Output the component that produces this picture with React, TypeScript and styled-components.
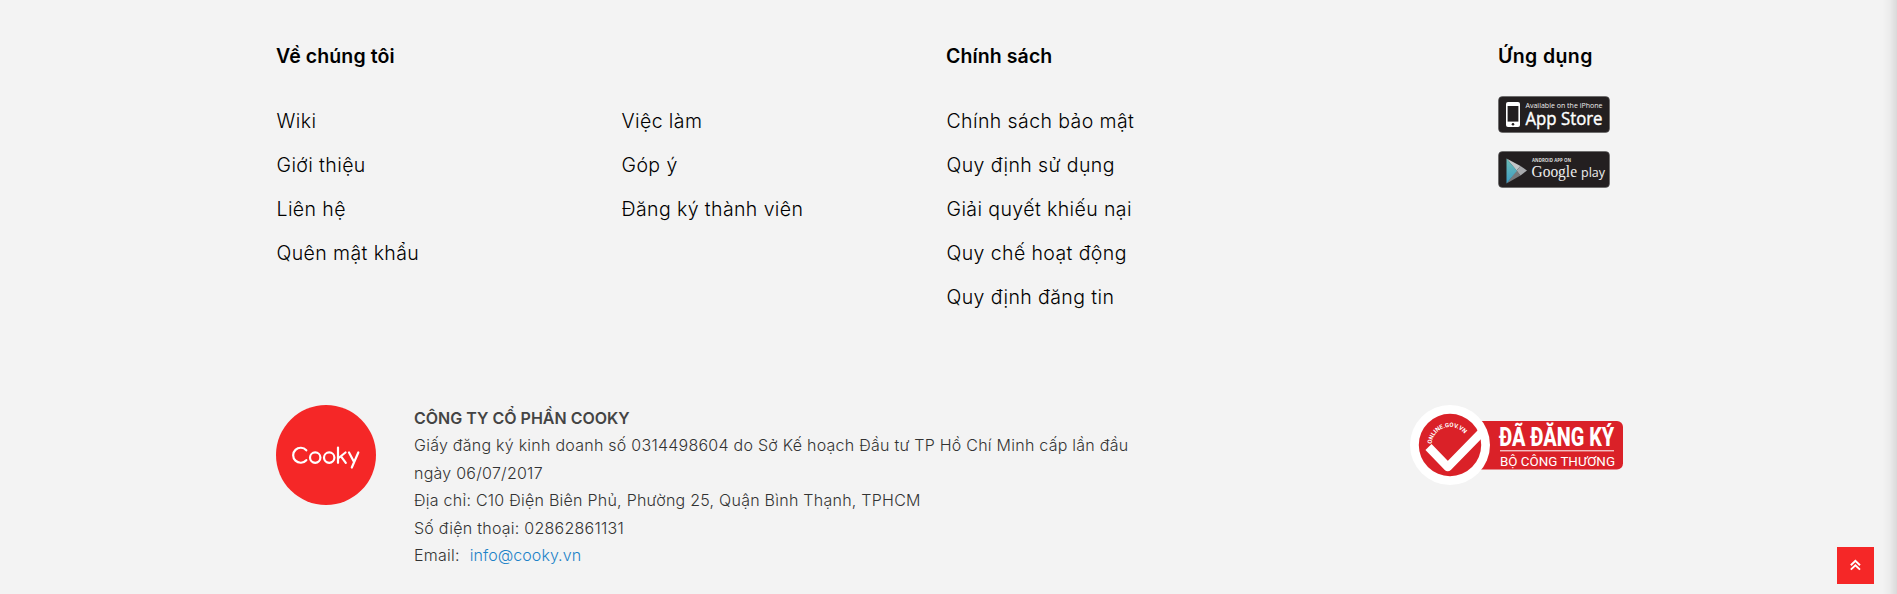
import React from "react";
import styled, { createGlobalStyle } from "styled-components";

const Global = createGlobalStyle`
  * { box-sizing: border-box; }
  html, body { margin: 0; padding: 0; }
  body { background: #f3f3f3; font-family: Inter, "Liberation Sans", sans-serif; overflow: hidden; }
`;

const Page = styled.footer`
  height: 594px;
  padding: 42px 0 0 276px;
  color: #000;
`;

const TopRow = styled.div`
  display: grid;
  grid-template-columns: 670px 552px 1fr;
  height: 363px;
`;

const Section = styled.section`
  display: flex;
  flex-direction: column;
`;

const Heading = styled.h3<{ $spacing: number }>`
  margin: 0;
  font-size: 19.5px;
  line-height: 28px;
  font-weight: 600;
  letter-spacing: ${(p) => p.$spacing}px;
`;

const LinkColumns = styled.div`
  display: grid;
  grid-template-columns: 345px 1fr;
  margin-top: 29px;
`;

const LinkList = styled.ul`
  list-style: none;
  margin: 0;
  padding: 0 0 0 0.5px;
`;

const LinkItem = styled.li`
  height: 44px;
  line-height: 44px;
  font-size: 19.5px;
  font-weight: 300;
  letter-spacing: 0.4px;
`;

const Badges = styled.div`
  display: flex;
  flex-direction: column;
  gap: 18px;
  margin-top: 26px;
`;

const BadgeSvg = styled.svg`
  display: block;
  width: 112px;
  height: 37px;
`;

const BottomRow = styled.div`
  display: grid;
  grid-template-columns: 138px 996px 1fr;
  align-items: start;
`;

const LogoSvg = styled.svg`
  display: block;
  width: 100px;
  height: 100px;
`;

const Company = styled.address`
  font-style: normal;
  color: #333;
  font-size: 16px;
  font-weight: 300;
  line-height: 27.4px;
`;

const CompanyName = styled.div`
  font-weight: 600;
  color: #444;
`;

const Line = styled.div`
  white-space: nowrap;
  letter-spacing: 0.25px;
`;

const Mail = styled.a`
  margin-left: 10px;
  color: #1c82c8;
  letter-spacing: 0.05px;
  text-decoration: none;
`;

const SealSvg = styled.svg`
  display: block;
  width: 214px;
  height: 80px;
`;

const ToTop = styled.button`
  position: fixed;
  right: 23px;
  bottom: 10px;
  width: 37px;
  height: 37px;
  padding: 0;
  border: 0;
  background: #f52727;
`;

const EdgeShade = styled.div`
  position: fixed;
  top: 0;
  right: 0;
  width: 14px;
  height: 100%;
  background: linear-gradient(to right, rgba(0, 0, 0, 0), rgba(0, 0, 0, 0.03) 50%, rgba(0, 0, 0, 0.1));
`;

const AppStoreBadge = () => (
  <BadgeSvg viewBox="0 0 112 37">
    <rect x="0.5" y="0.5" width="111" height="36" rx="4" fill="#231f20" stroke="#5b5b5b" strokeWidth="0.6" />
    <rect x="8" y="6" width="14" height="25" rx="2" fill="#fff" />
    <rect x="9.6" y="10" width="10.8" height="15.6" fill="#231f20" />
    <circle cx="15" cy="28.2" r="1.3" fill="#231f20" />
    <text x="27.5" y="11.5" fontFamily="Open Sans" fontSize="7" fill="#eee" textLength="77" lengthAdjust="spacingAndGlyphs">Available on the iPhone</text>
    <text x="27.5" y="29" fontFamily="Open Sans" fontSize="18" fill="#fff" stroke="#fff" strokeWidth="0.4" textLength="77" lengthAdjust="spacingAndGlyphs">App Store</text>
  </BadgeSvg>
);

const GooglePlayBadge = () => (
  <BadgeSvg viewBox="0 0 112 37">
    <defs>
      <linearGradient id="play" x1="0" y1="0" x2="0" y2="1">
        <stop offset="0" stopColor="#6dbdb5" />
        <stop offset="1" stopColor="#3e9cc4" />
      </linearGradient>
    </defs>
    <rect x="0.5" y="0.5" width="111" height="36" rx="4" fill="#231f20" stroke="#5b5b5b" strokeWidth="0.6" />
    <path d="M8.5 7.5 L22.5 15 L18.5 19.5Z" fill="#c4c6c8" />
    <path d="M8.5 32.5 L22.5 24.5 L18.5 19.5Z" fill="#77797c" />
    <path d="M22.5 15 L29 19.5 L22.5 24.5 L18.5 19.5Z" fill="#a8aaad" />
    <path d="M8.5 7.5 L19 19.7 L8.5 32.5Z" fill="url(#play)" />
    <text x="34" y="10.7" fontFamily="Open Sans" fontWeight="700" fontSize="4.5" fill="#ddd" textLength="39" lengthAdjust="spacingAndGlyphs">ANDROID APP ON</text>
    <text x="33.5" y="25.7" fontFamily="Liberation Serif" fontSize="17" fill="#eee" textLength="45.5" lengthAdjust="spacingAndGlyphs">Google</text>
    <text x="83" y="25.7" fontFamily="Open Sans" fontSize="13.5" fill="#eee" textLength="24" lengthAdjust="spacingAndGlyphs">play</text>
  </BadgeSvg>
);

const CookyLogo = () => (
  <LogoSvg viewBox="0 0 100 100">
    <circle cx="50" cy="50" r="50" fill="#f52727" />
    <g fill="none" stroke="#fff" strokeWidth="2.2" strokeLinecap="round" strokeLinejoin="round">
      <path d="M30.3 45.3 A7.5 7.5 0 1 0 30.3 55.2" />
      <circle cx="39.2" cy="52.6" r="5.2" />
      <circle cx="53.2" cy="52.6" r="5.2" />
      <path d="M62 42.5 V57.8 M69.5 47.5 L62 53.5 M65 51.3 L69.8 57.8" />
      <path d="M73 47.5 L77.8 56.5 M82.3 47.5 L75.8 62.5" />
    </g>
  </LogoSvg>
);

const TradeSeal = () => (
  <SealSvg viewBox="0 0 214 80">
    <defs>
      <path id="arc" d="M21.6 39 A18.5 18.5 0 0 1 58 36" />
    </defs>
    <rect x="50" y="16" width="163" height="48.5" rx="6" fill="#da2128" />
    <circle cx="40" cy="40" r="40" fill="#fff" />
    <circle cx="40" cy="40" r="31.2" fill="#da2128" />
    <path d="M18.5 42 L37.8 62 L72 27" fill="none" stroke="#fff" strokeWidth="8.5" strokeLinejoin="round" />
    <text fontFamily="Roboto" fontWeight="700" fontSize="6" fill="#fff" textLength="44">
      <textPath href="#arc">ONLINE.GOV.VN</textPath>
    </text>
    <text x="0" y="41" fontFamily="Roboto" fontWeight="800" fontSize="26" fill="#fff" transform="translate(89 0) scale(.72 1)" textLength="160" lengthAdjust="spacingAndGlyphs">ĐÃ ĐĂNG KÝ</text>
    <rect x="90" y="45.3" width="114" height="1" fill="#fff" />
    <text x="90" y="60.8" fontFamily="Roboto" fontSize="13.3" fontWeight="400" fill="#fff" textLength="115" lengthAdjust="spacingAndGlyphs">BỘ CÔNG THƯƠNG</text>
  </SealSvg>
);

const Links = ({ items }: { items: string[] }) => (
  <LinkList>
    {items.map((t) => (
      <LinkItem key={t}>{t}</LinkItem>
    ))}
  </LinkList>
);

export default function App() {
  return (
    <>
      <Global />
      <Page>
        <TopRow>
          <Section>
            <Heading $spacing={0.1}>Về chúng tôi</Heading>
            <LinkColumns>
              <Links items={["Wiki", "Giới thiệu", "Liên hệ", "Quên mật khẩu"]} />
              <Links items={["Việc làm", "Góp ý", "Đăng ký thành viên"]} />
            </LinkColumns>
          </Section>
          <Section>
            <Heading $spacing={0.1}>Chính sách</Heading>
            <LinkColumns>
              <Links
                items={["Chính sách bảo mật", "Quy định sử dụng", "Giải quyết khiếu nại", "Quy chế hoạt động", "Quy định đăng tin"]}
              />
            </LinkColumns>
          </Section>
          <Section>
            <Heading $spacing={0.4}>Ứng dụng</Heading>
            <Badges>
              <AppStoreBadge />
              <GooglePlayBadge />
            </Badges>
          </Section>
        </TopRow>
        <BottomRow>
          <CookyLogo />
          <Company>
            <CompanyName>CÔNG TY CỔ PHẦN COOKY</CompanyName>
            <Line>Giấy đăng ký kinh doanh số 0314498604 do Sở Kế hoạch Đầu tư TP Hồ Chí Minh cấp lần đầu</Line>
            <Line>ngày 06/07/2017</Line>
            <Line>Địa chỉ: C10 Điện Biên Phủ, Phường 25, Quận Bình Thạnh, TPHCM</Line>
            <Line>Số điện thoại: 02862861131</Line>
            <Line>
              Email:<Mail>info@cooky.vn</Mail>
            </Line>
          </Company>
          <TradeSeal />
        </BottomRow>
      </Page>
      <EdgeShade />
      <ToTop aria-label="Lên đầu trang">
        <svg width="37" height="37" viewBox="0 0 37 37" fill="none" stroke="#fff" strokeWidth="1.9">
          <path d="M13.8 18.3 L18.4 13.9 L23 18.3 M13.8 22.6 L18.4 18.2 L23 22.6" />
        </svg>
      </ToTop>
    </>
  );
}
